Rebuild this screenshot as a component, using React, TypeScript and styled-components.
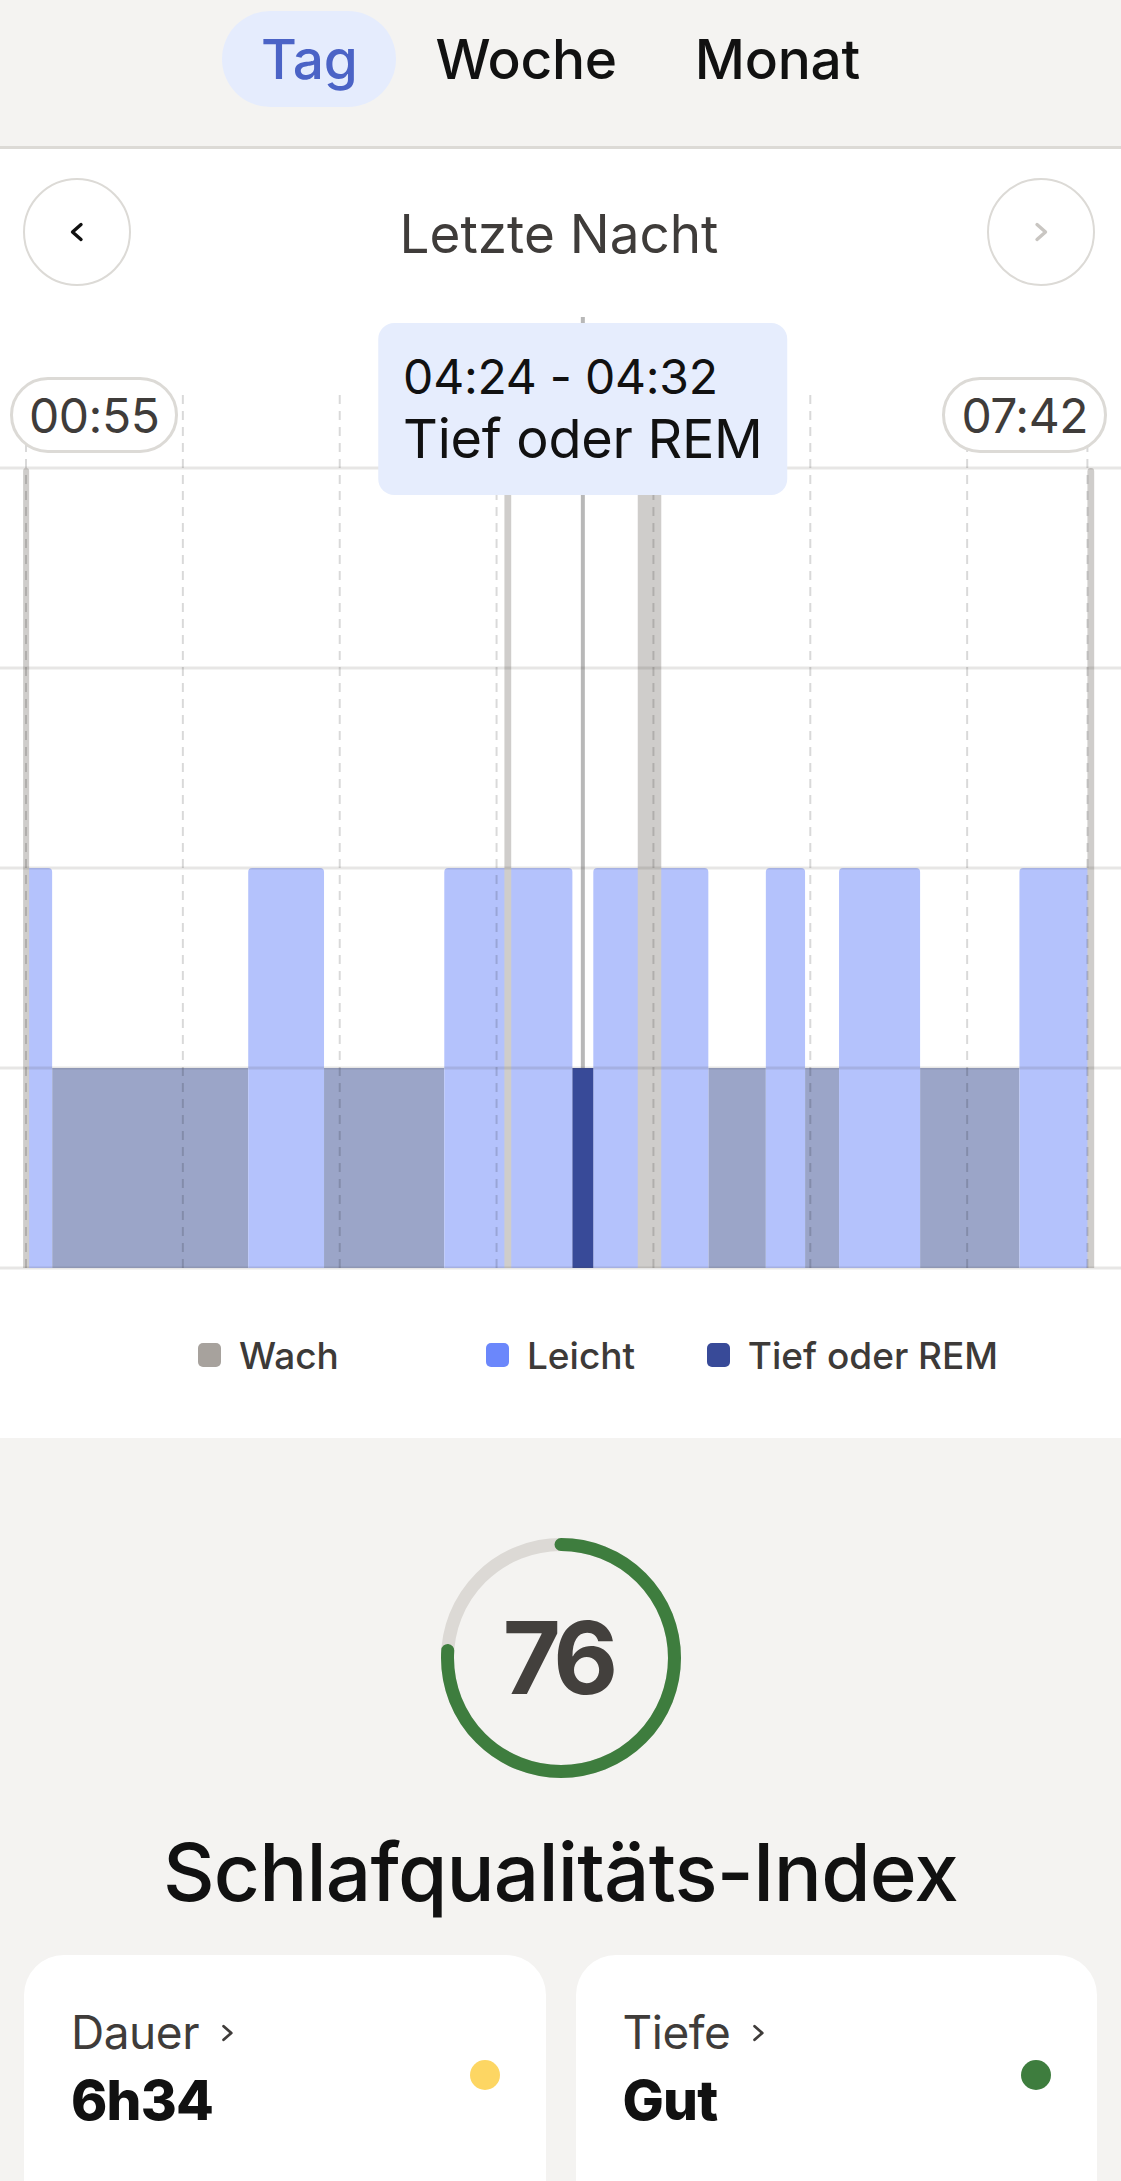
import styled, { createGlobalStyle } from 'styled-components'

const GlobalStyle = createGlobalStyle`
  html, body {
    margin: 0;
    padding: 0;
    overflow: hidden;
    background: #f4f3f1;
  }
  body {
    font-family: Inter, "Noto Sans", sans-serif;
    -webkit-font-smoothing: antialiased;
  }
  * { box-sizing: border-box; }
`

const palette = {
  ink: '#111111',
  text: '#3f3c3a',
  line: '#dcdad6',
  wach: '#a7a29d',
  leicht: '#6b87fb',
  tief: '#384a98',
  green: '#3e7d3e',
  yellow: '#fdd663',
}

// chart geometry (px inside the chart svg)
const chart = {
  width: 1121,
  height: 986,
  x0: 26,
  pxPerMin: 2.6143,
  wachTop: 182,
  leichtTop: 582,
  tiefTop: 782,
  bottom: 982,
  grid: [182, 382, 582, 782, 982],
}

const xAt = (min: number) => chart.x0 + min * chart.pxPerMin

type Stage = 'wach' | 'leicht' | 'tief'
type Segment = { stage: Stage; from: number; to: number; selected?: boolean }

// minutes since 00:55
const segments: Segment[] = [
  { stage: 'tief', from: 10, to: 85 },
  { stage: 'tief', from: 114, to: 160 },
  { stage: 'tief', from: 261, to: 283 },
  { stage: 'tief', from: 298, to: 311 },
  { stage: 'tief', from: 342, to: 380 },
  { stage: 'leicht', from: 0, to: 10 },
  { stage: 'leicht', from: 85, to: 114 },
  { stage: 'leicht', from: 160, to: 209 },
  { stage: 'leicht', from: 217, to: 261 },
  { stage: 'leicht', from: 283, to: 298 },
  { stage: 'leicht', from: 311, to: 342 },
  { stage: 'leicht', from: 380, to: 407 },
  { stage: 'tief', from: 209, to: 217, selected: true },
  { stage: 'wach', from: -1.1, to: 1.2 },
  { stage: 'wach', from: 183, to: 185.6 },
  { stage: 'wach', from: 234, to: 243 },
  { stage: 'wach', from: 406, to: 408.6 },
]

const fills: Record<Stage, string> = {
  wach: '#cfcdcb',
  leicht: '#b4c2fc',
  tief: '#9ba5c8',
}

const tops: Record<Stage, number> = {
  wach: chart.wachTop,
  leicht: chart.leichtTop,
  tief: chart.tiefTop,
}

const roundedTop = (x1: number, x2: number, top: number, bottom: number, r: number) =>
  `M${x1},${bottom} V${top + r} Q${x1},${top} ${x1 + r},${top} H${x2 - r} Q${x2},${top} ${x2},${top + r} V${bottom} Z`

const hourMarks = [0, 60, 120, 180, 240, 300, 360, 406]
const cursorMin = 213

/* ---------- header tabs ---------- */

const Tabs = styled.nav`
  display: flex;
  justify-content: center;
  align-items: flex-start;
  height: 149px;
  padding-top: 11px;
  background: #f4f3f1;
  border-bottom: 3px solid ${palette.line};
`

const Tab = styled.button<{ $active?: boolean }>`
  height: 96px;
  padding: 0 39px;
  border: 0;
  border-radius: 48px;
  background: ${(p) => (p.$active ? '#e5ecfd' : 'transparent')};
  color: ${(p) => (p.$active ? '#4b63c6' : palette.ink)};
  font-family: Inter, sans-serif;
  font-size: 55px;
  font-weight: 500;
  letter-spacing: -0.005em;
  line-height: 1;
  cursor: pointer;
`

/* ---------- chart card ---------- */

const ChartCard = styled.section`
  background: #ffffff;
  padding-top: 29px;
`

const NavRow = styled.div`
  display: flex;
  align-items: center;
  justify-content: space-between;
  padding: 0 26px 0 23px;
`

const RoundButton = styled.button<{ $disabled?: boolean }>`
  width: 108px;
  height: 108px;
  border-radius: 50%;
  border: 2.5px solid ${palette.line};
  background: #fff;
  display: flex;
  align-items: center;
  justify-content: center;
  padding: 0;
  color: ${(p) => (p.$disabled ? '#c9c6c2' : palette.ink)};
`

const NavTitle = styled.h2`
  margin: 4px 0 0;
  font-size: 53px;
  font-weight: 400;
  color: ${palette.text};
  letter-spacing: 0;
`

const ChartArea = styled.div`
  position: relative;
  height: ${chart.height}px;
`

const ChartSvg = styled.svg`
  display: block;
  width: 100%;
  height: 100%;
`

const TimePill = styled.div<{ $side: 'left' | 'right' }>`
  position: absolute;
  top: 91px;
  ${(p) => (p.$side === 'left' ? 'left: 10px;' : 'right: 14px;')}
  height: 76px;
  padding: 0 16px;
  border: 3px solid ${palette.line};
  border-radius: 38px;
  background: #fff;
  display: flex;
  align-items: center;
  font-size: 48px;
  color: ${palette.text};
  letter-spacing: -0.01em;
`

const Tooltip = styled.div`
  position: absolute;
  top: 37px;
  transform: translateX(-50%);
  padding: 23px 25px 25px 25px;
  background: #e6edfd;
  border-radius: 16px;
  color: ${palette.ink};
  white-space: nowrap;
`

const TooltipLine = styled.div<{ $size: number }>`
  font-size: ${(p) => p.$size}px;
  line-height: 62px;
  letter-spacing: -0.005em;
`

const Legend = styled.div`
  height: 166px;
  display: grid;
  grid-template-columns: repeat(3, 292px);
  justify-content: center;
  justify-items: center;
  align-items: center;
`

const LegendItem = styled.div`
  display: flex;
  align-items: center;
  gap: 18px;
  font-size: 37px;
  font-weight: 500;
  color: #3d3a38;
`

const Swatch = styled.span<{ $color: string }>`
  width: 23px;
  height: 24px;
  border-radius: 5px;
  background: ${(p) => p.$color};
`

/* ---------- score section ---------- */

const ScoreSection = styled.section`
  display: flex;
  flex-direction: column;
  align-items: center;
  padding-top: 100px;
`

const Ring = styled.div`
  position: relative;
  width: 240px;
  height: 240px;
  display: flex;
  align-items: center;
  justify-content: center;
`

const RingSvg = styled.svg`
  position: absolute;
  inset: 0;
`

const ScoreValue = styled.span`
  position: relative;
  font-size: 100px;
  font-weight: 700;
  letter-spacing: -0.06em;
  color: #43403d;
  line-height: 1;
  margin-left: -6px;
`

const ScoreTitle = styled.h1`
  margin: 46px 0 0;
  font-size: 80px;
  font-weight: 500;
  line-height: 96px;
  letter-spacing: -0.01em;
  color: ${palette.ink};
`

const Tiles = styled.div`
  align-self: stretch;
  display: grid;
  grid-template-columns: 1fr 1fr;
  gap: 30px;
  padding: 35px 24px 0;
`

const Tile = styled.div`
  background: #fff;
  border-radius: 40px;
  min-height: 280px;
  padding: 50px 46px 0 47px;
  display: flex;
  align-items: flex-start;
  justify-content: space-between;
`

const TileText = styled.div`
  display: flex;
  flex-direction: column;
`

const TileLabel = styled.div`
  display: flex;
  align-items: center;
  gap: 20px;
  font-size: 46px;
  line-height: 55px;
  color: ${palette.text};
  letter-spacing: -0.01em;
`

const TileValue = styled.div`
  margin-top: 7px;
  font-size: 55px;
  line-height: 66px;
  font-weight: 800;
  color: ${palette.ink};
  letter-spacing: -0.015em;
`

const Dot = styled.span<{ $color: string }>`
  width: 30px;
  height: 30px;
  margin-top: 55px;
  border-radius: 50%;
  background: ${(p) => p.$color};
`

function Chevron({ dir, size = 22, stroke = 3.4 }: { dir: 'left' | 'right'; size?: number; stroke?: number }) {
  const d = dir === 'left' ? 'M13 3.5 L4.5 11 L13 18.5' : 'M5 3.5 L13.5 11 L5 18.5'
  return (
    <svg width={size * 0.82} height={size} viewBox="0 0 18 22" fill="none">
      <path d={d} stroke="currentColor" strokeWidth={stroke} strokeLinecap="round" strokeLinejoin="round" />
    </svg>
  )
}

function SleepChart() {
  const cx = xAt(cursorMin)
  return (
    <ChartArea>
      <ChartSvg viewBox={`0 0 ${chart.width} ${chart.height}`} preserveAspectRatio="none">
        {segments.map((s, i) => {
          const x1 = xAt(s.from)
          const x2 = xAt(s.to)
          const top = tops[s.stage]
          if (s.stage === 'tief') {
            return (
              <rect
                key={i}
                x={x1}
                y={top}
                width={x2 - x1}
                height={chart.bottom - top}
                fill={s.selected ? palette.tief : fills.tief}
              />
            )
          }
          const r = Math.min(4, (x2 - x1) / 2)
          return <path key={i} d={roundedTop(x1, x2, top, chart.bottom, r)} fill={fills[s.stage]} />
        })}
        <line x1={cx} x2={cx} y1={31} y2={chart.tiefTop} stroke="#b8b8b8" strokeWidth={4} />
        {hourMarks.map((m) => (
          <line
            key={m}
            x1={xAt(m)}
            x2={xAt(m)}
            y1={109}
            y2={chart.bottom}
            stroke="rgba(0,0,0,0.15)"
            strokeWidth={2}
            strokeDasharray="9 7"
          />
        ))}
        {chart.grid.map((y) => (
          <line key={y} x1={0} x2={chart.width} y1={y} y2={y} stroke="rgba(60,50,40,0.12)" strokeWidth={3} />
        ))}
      </ChartSvg>
      <TimePill $side="left">00:55</TimePill>
      <TimePill $side="right">07:42</TimePill>
      <Tooltip style={{ left: cx }}>
        <TooltipLine $size={48}>04:24 - 04:32</TooltipLine>
        <TooltipLine $size={54}>Tief oder REM</TooltipLine>
      </Tooltip>
    </ChartArea>
  )
}

function ScoreRing({ value }: { value: number }) {
  const r = 113.5
  const c = 2 * Math.PI * r
  return (
    <Ring>
      <RingSvg width={240} height={240} viewBox="0 0 240 240">
        <circle cx={120} cy={120} r={r} fill="none" stroke="#dcd9d5" strokeWidth={13} />
        <circle
          cx={120}
          cy={120}
          r={r}
          fill="none"
          stroke={palette.green}
          strokeWidth={13}
          strokeLinecap="round"
          strokeDasharray={`${(c * value) / 100} ${c}`}
          transform="rotate(-90 120 120)"
        />
      </RingSvg>
      <ScoreValue>{value}</ScoreValue>
    </Ring>
  )
}

export default function App() {
  return (
    <>
      <GlobalStyle />
      <Tabs>
        <Tab $active>Tag</Tab>
        <Tab>Woche</Tab>
        <Tab>Monat</Tab>
      </Tabs>
      <ChartCard>
        <NavRow>
          <RoundButton aria-label="Zurück">
            <Chevron dir="left" />
          </RoundButton>
          <NavTitle>Letzte Nacht</NavTitle>
          <RoundButton $disabled aria-label="Weiter">
            <Chevron dir="right" />
          </RoundButton>
        </NavRow>
        <SleepChart />
        <Legend>
          <LegendItem>
            <Swatch $color={palette.wach} />
            Wach
          </LegendItem>
          <LegendItem>
            <Swatch $color={palette.leicht} />
            Leicht
          </LegendItem>
          <LegendItem>
            <Swatch $color={palette.tief} />
            Tief oder REM
          </LegendItem>
        </Legend>
      </ChartCard>
      <ScoreSection>
        <ScoreRing value={76} />
        <ScoreTitle>Schlafqualitäts-Index</ScoreTitle>
        <Tiles>
          <Tile>
            <TileText>
              <TileLabel>
                Dauer
                <Chevron dir="right" size={20} stroke={3} />
              </TileLabel>
              <TileValue>6h34</TileValue>
            </TileText>
            <Dot $color={palette.yellow} />
          </Tile>
          <Tile>
            <TileText>
              <TileLabel>
                Tiefe
                <Chevron dir="right" size={20} stroke={3} />
              </TileLabel>
              <TileValue>Gut</TileValue>
            </TileText>
            <Dot $color={palette.green} />
          </Tile>
        </Tiles>
      </ScoreSection>
    </>
  )
}
